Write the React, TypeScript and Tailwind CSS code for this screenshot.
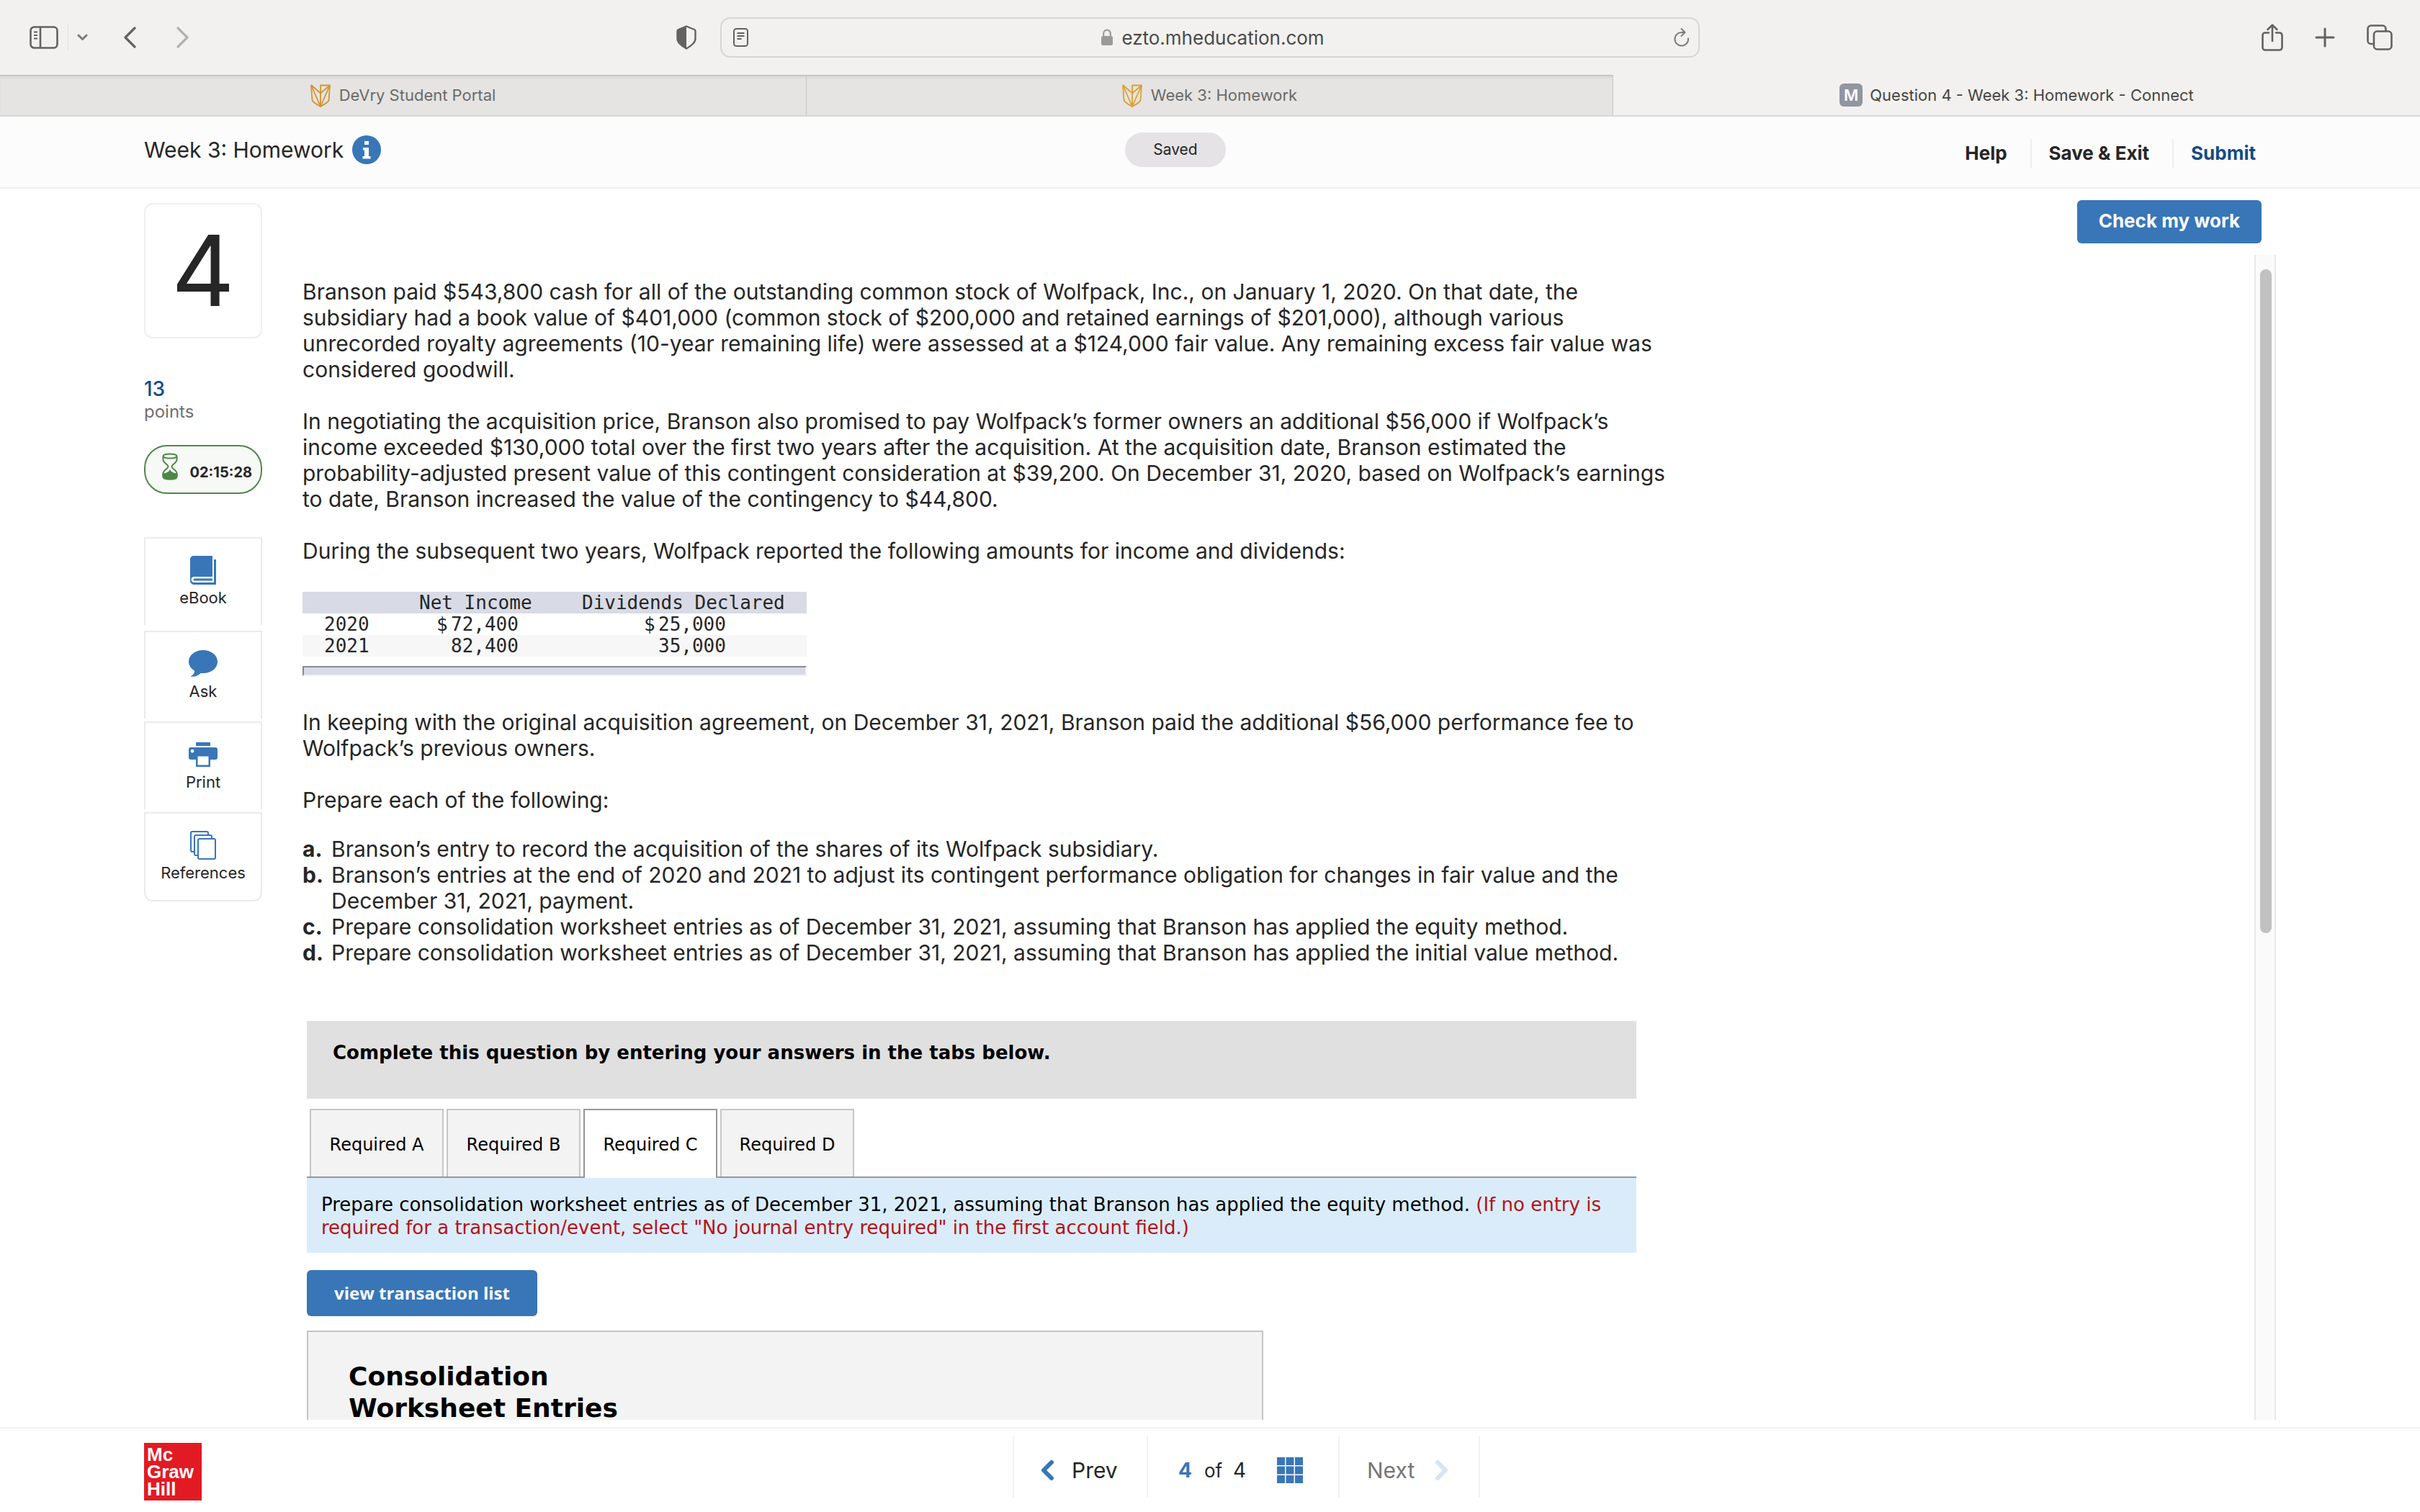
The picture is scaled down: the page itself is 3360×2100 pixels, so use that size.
import type { ReactNode } from "react";

const TOOLS = [
  { label: "eBook", icon: <BookIcon /> },
  { label: "Ask", icon: <AskIcon /> },
  { label: "Print", icon: <PrintIcon /> },
  { label: "References", icon: <ReferencesIcon /> },
];

const ROWS = [
  { year: "2020", sign: "$", income: "72,400", dividends: "25,000" },
  { year: "2021", sign: "", income: "82,400", dividends: "35,000" },
];

const REQUIREMENTS = ["Required A", "Required B", "Required C", "Required D"];
const ACTIVE = "Required C";

export default function App() {
  return (
    <div className="flex h-screen flex-col overflow-hidden bg-white font-['Inter','Liberation_Sans',sans-serif] text-[#262626]">
      <BrowserToolbar />
      <BrowserTabs />
      <AssignmentHeader />
      <main className="flex min-h-0 flex-1 pb-[10px]">
        <Sidebar />
        <div className="flex min-w-0 flex-1 flex-col">
          <div className="flex h-[92px] shrink-0 justify-end pt-4 pr-[220px]">
            <button className="h-[60px] rounded-md bg-[#3876b8] px-[30px] pb-1 text-[26px] font-bold text-white">
              Check my work
            </button>
          </div>
          <div className="flex min-h-0 flex-1 pr-[200px]">
            <Question />
            {/* scroll track */}
            <div className="w-[30px] shrink-0 border-x-2 border-[#e8e8e8] bg-[#fafafa] px-[6px] pt-5">
              <div className="h-[922px] w-4 rounded-full bg-[#c1c1c1]" />
            </div>
          </div>
        </div>
      </main>
      <Footer />
    </div>
  );
}

function BrowserToolbar() {
  return (
    <div className="flex h-[104px] shrink-0 items-center justify-between bg-[#f2f1ef] pr-[38px] pl-[41px] text-[#636261]">
      <div className="flex w-[926px] items-center justify-between">
        <div className="flex items-center">
          <button aria-label="Sidebar">
            <svg width="40" height="32" viewBox="0 0 40 32" fill="none" stroke="currentColor" strokeWidth="2.6">
              <rect x="1.5" y="1.5" width="37" height="29" rx="5" />
              <path d="M15 2v28" />
              <path d="M6 8.500h5M6 13h5M6 17.500h5" strokeWidth="2" />
            </svg>
          </button>
          <span className="ml-[13px] h-9 w-px bg-[#e0dfdd]" />
          <button className="ml-3" aria-label="Tab groups">
            <svg width="15" height="10" viewBox="0 0 15 10" fill="none" stroke="#7b7a79" strokeWidth="3" strokeLinecap="round" strokeLinejoin="round">
              <path d="M2 2l5.500 5.500L13 2" />
            </svg>
          </button>
          <button className="ml-[49px]" aria-label="Back">
            <svg width="18" height="30" viewBox="0 0 18 30" fill="none" stroke="currentColor" strokeWidth="3.200" strokeLinecap="round" strokeLinejoin="round">
              <path d="M16 2L3 15l13 13" />
            </svg>
          </button>
          <button className="ml-14" aria-label="Forward">
            <svg width="18" height="30" viewBox="0 0 18 30" fill="none" stroke="#b1b0af" strokeWidth="3.200" strokeLinecap="round" strokeLinejoin="round">
              <path d="M2 2l13 13L2 28" />
            </svg>
          </button>
        </div>
        <button aria-label="Privacy report">
          <svg width="28" height="34" viewBox="0 0 28 34">
            <path d="M14 1.500L25 6q1.500.6 1.500 2.500v10c0 6-6 10-12.500 14C7.500 28.500 1.500 24.500 1.500 18.500v-10Q1.500 6.600 3 6z" fill="none" stroke="currentColor" strokeWidth="2.400" strokeLinejoin="round" />
            <path d="M14 1.500v31C7.500 28.500 1.500 24.500 1.500 18.500v-10Q1.500 6.600 3 6z" fill="currentColor" />
          </svg>
        </button>
      </div>
      <div className="flex h-14 w-[1360px] items-center justify-between rounded-[14px] border-2 border-[#d7d6d4] px-4">
        <svg width="22" height="26" viewBox="0 0 22 26" fill="none" stroke="currentColor" strokeWidth="2">
          <rect x="1" y="1" width="19" height="24" rx="3.500" />
          <path d="M5.500 7h10M5.500 11h10M5.500 15h6" />
        </svg>
        <div className="flex items-center gap-3 pl-4 text-[26px] text-[#4b4a49]">
          <svg width="16" height="24" viewBox="0 0 16 24" className="text-[#9b9a99]">
            <rect y="10" width="16" height="13" rx="2.500" fill="currentColor" />
            <path d="M3.200 11V6.500a4.800 4.800 0 019.600 0V11" fill="none" stroke="currentColor" strokeWidth="2.200" />
          </svg>
          ezto.mheducation.com
        </div>
        <button className="-mr-4 px-3" aria-label="Reload">
          <svg width="22" height="28" viewBox="0 0 22 28" fill="none" stroke="#7b7a79" strokeWidth="2" strokeLinecap="round" strokeLinejoin="round">
            <path d="M20 15.500A9.300 9.300 0 1111 7h4" />
            <path d="M10.500 2l5 5-5 5" />
          </svg>
        </button>
      </div>
      <div className="flex w-[929px] items-center justify-end gap-11">
        <button aria-label="Share">
          <svg width="30" height="38" viewBox="0 0 30 38" fill="none" stroke="currentColor" strokeWidth="2.600" strokeLinecap="round" strokeLinejoin="round">
            <path d="M10 12.500H5A3.500 3.500 0 001.500 16v17A3.500 3.500 0 005 36.500h20a3.500 3.500 0 003.500-3.500V16a3.500 3.500 0 00-3.500-3.500h-5" />
            <path d="M15 24V2M8.500 8L15 1.800 21.500 8" />
          </svg>
        </button>
        <button aria-label="New tab">
          <svg width="28" height="28" viewBox="0 0 28 28" fill="none" stroke="currentColor" strokeWidth="3" strokeLinecap="round">
            <path d="M14 2v24M2 14h24" />
          </svg>
        </button>
        <button aria-label="Tab overview">
          <svg width="36" height="36" viewBox="0 0 36 36" fill="none" stroke="currentColor" strokeWidth="2.600">
            <path d="M10 27H6a4.500 4.500 0 01-4.500-4.500V6A4.500 4.500 0 016 1.500h16A4.500 4.500 0 0126.500 6v3" />
            <rect x="10" y="9.500" width="24.500" height="25" rx="4.500" />
          </svg>
        </button>
      </div>
    </div>
  );
}

function BrowserTabs() {
  return (
    <nav className="grid h-[58px] shrink-0 grid-cols-3 border-b-2 border-[#d8d8d7] bg-[#f2f1ef] text-[22px]">
      <InactiveTab>
        <DevryIcon color="#d1962f" />
        DeVry Student Portal
      </InactiveTab>
      <InactiveTab>
        <DevryIcon color="#dca12e" />
        Week 3: Homework
      </InactiveTab>
      <a href="#question" className="flex items-center justify-center gap-[10px] text-[#464544]">
        <span className="flex size-8 items-center justify-center rounded-md bg-[#9295a2] text-[22px] font-semibold text-white">
          M
        </span>
        Question 4 - Week 3: Homework - Connect
      </a>
    </nav>
  );
}

function InactiveTab({ children }: { children: ReactNode }) {
  return (
    <a
      href="#tab"
      className="flex items-center justify-center gap-3 border-t border-r border-t-[#bcbbb9] border-r-[#cdccca] bg-[#e5e4e2] text-[#6b6a69] shadow-[inset_0_3px_3px_-1px_#cfcecc]"
    >
      {children}
    </a>
  );
}

function AssignmentHeader() {
  return (
    <header className="grid h-[100px] shrink-0 grid-cols-[1362px_1fr_auto] items-center border-b-2 border-[#efefef] bg-[#fcfcfc] pr-[228px] pb-[6px] pl-[200px]">
      <div className="flex items-center gap-3">
        <h1 className="text-[30px]">Week 3: Homework</h1>
        <button aria-label="Assignment information">
          <svg width="40" height="40" viewBox="0 0 40 40">
            <circle cx="20" cy="20" r="20" fill="#3876b8" />
            <path d="M17 8h6v5h-6zM15 17h8v12h2.500v3.500h-11V29H17v-8.500h-2z" fill="#fff" />
          </svg>
        </button>
      </div>
      <span className="flex h-12 w-[140px] items-center justify-center rounded-full bg-[#e5e3e6] text-[21px]">
        Saved
      </span>
      <div className="flex items-center pt-[10px] text-[26px] leading-[40px] font-bold">
        <a href="#help" className="pr-8">Help</a>
        <a href="#exit" className="border-x-2 border-[#efefef] pr-8 pl-6">Save &amp; Exit</a>
        <button className="pl-6 text-[#164a85]">Submit</button>
      </div>
    </header>
  );
}

function Sidebar() {
  return (
    <aside className="ml-[200px] flex w-[164px] shrink-0 flex-col pt-5">
      <div className="flex h-[188px] items-center justify-center rounded-xl border-2 border-[#efefef] text-[136px] leading-none">
        4
      </div>
      <div className="mt-[54px] text-[28px] leading-8 font-medium text-[#164a85]">13</div>
      <div className="text-[24px] leading-8 text-[#707070]">points</div>
      <div className="mt-[30px] flex h-[68px] items-center justify-between rounded-[32px] border-2 border-[#4c8845] bg-[#f7f9f7] pr-3 pl-[23px]">
        <svg width="22" height="38" viewBox="0 0 22 38" fill="none" stroke="#4c8845" strokeWidth="2" className="mb-2">
          <ellipse cx="11" cy="4.500" rx="9.500" ry="3" />
          <path d="M1.500 5v4.500c0 4.500 7 6.500 7 9.500s-7 5-7 9.500V33c0 2 4 3.500 9.500 3.500s9.500-1.500 9.500-3.500v-4.500c0-4.500-7-6.500-7-9.500s7-5 7-9.500V5" />
          <path d="M1.500 33v-3.500c4-.5 8-2 9.500-4.500 1.500 2.500 5.500 4 9.500 4.500V33c0 2-4 3.500-9.500 3.500S1.500 35 1.500 33z" fill="#4c8845" />
        </svg>
        <span className="pt-2 text-[20px] font-bold">02:15:28</span>
      </div>
      <div className="mt-[60px] flex flex-col gap-1">
        {TOOLS.map((tool) => (
          <button
            key={tool.label}
            className="flex h-[122px] flex-col items-center border-2 border-b-0 border-[#ebebeb] pt-6 text-[22px] leading-7 first:mb-1 last:h-[124px] last:rounded-b-xl last:border-b-2"
          >
            <span className="mb-1 flex h-10 items-center">{tool.icon}</span>
            {tool.label}
          </button>
        ))}
      </div>
    </aside>
  );
}

function Question() {
  return (
    <article className="min-w-0 flex-1 overflow-hidden pt-[33px] pl-14 text-[30px] leading-[36px]">
      <p>
        Branson paid $543,800 cash for all of the outstanding common stock of Wolfpack, Inc., on January 1, 2020. On that date, the<br />
        subsidiary had a book value of $401,000 (common stock of $200,000 and retained earnings of $201,000), although various<br />
        unrecorded royalty agreements (10-year remaining life) were assessed at a $124,000 fair value. Any remaining excess fair value was<br />
        considered goodwill.
      </p>
      <p className="mt-9">
        In negotiating the acquisition price, Branson also promised to pay Wolfpack’s former owners an additional $56,000 if Wolfpack’s<br />
        income exceeded $130,000 total over the first two years after the acquisition. At the acquisition date, Branson estimated the<br />
        probability-adjusted present value of this contingent consideration at $39,200. On December 31, 2020, based on Wolfpack’s earnings<br />
        to date, Branson increased the value of the contingency to $44,800.
      </p>
      <p className="mt-9">
        During the subsequent two years, Wolfpack reported the following amounts for income and dividends:
      </p>

      <IncomeTable />

      <p className="mt-[46px]">
        In keeping with the original acquisition agreement, on December 31, 2021, Branson paid the additional $56,000 performance fee to<br />
        Wolfpack’s previous owners.
      </p>
      <p className="mt-9">Prepare each of the following:</p>
      <dl className="mt-8 grid grid-cols-[24px_1fr] gap-x-4">
        <Item letter="a">Branson’s entry to record the acquisition of the shares of its Wolfpack subsidiary.</Item>
        <Item letter="b">
          Branson’s entries at the end of 2020 and 2021 to adjust its contingent performance obligation for changes in fair value and the<br />
          December 31, 2021, payment.
        </Item>
        <Item letter="c">
          Prepare consolidation worksheet entries as of December 31, 2021, assuming that Branson has applied the equity method.
        </Item>
        <Item letter="d">
          Prepare consolidation worksheet entries as of December 31, 2021, assuming that Branson has applied the initial value method.
        </Item>
      </dl>

      <AnswerArea />
    </article>
  );
}

function Item({ letter, children }: { letter: string; children: ReactNode }) {
  return (
    <>
      <dt className="text-right font-bold whitespace-nowrap">{letter}.</dt>
      <dd>{children}</dd>
    </>
  );
}

function IncomeTable() {
  return (
    <div className="mt-[39px] w-[700px] font-['DejaVu_Sans_Mono',monospace] text-[26px] leading-[30px]">
      <table className="w-full border-collapse text-left">
        <thead>
          <tr className="bg-[#d8dbe6]">
            <th className="w-[162px] p-0" aria-label="Year" />
            <th className="w-[226px] p-0 font-normal">Net Income</th>
            <th className="p-0 font-normal">Dividends Declared</th>
          </tr>
        </thead>
        <tbody>
          {ROWS.map((row) => (
            <tr key={row.year} className="even:bg-[#f7f7f7]">
              <td className="p-0 pl-[30px]">{row.year}</td>
              <td className="p-0 pl-6">
                <Amount sign={row.sign} value={row.income} />
              </td>
              <td className="p-0 pl-[86px]">
                <Amount sign={row.sign} value={row.dividends} />
              </td>
            </tr>
          ))}
        </tbody>
      </table>
      <hr className="mt-[13px] h-[14px] border-2 border-t-[#888a92] border-r-[#eff1fd] border-b-[#eff1fd] border-l-[#888a92] bg-[#d8dbe6]" />
    </div>
  );
}

function Amount({ sign, value }: { sign: string; value: string }) {
  return (
    <span className="flex gap-1">
      <span className="w-4">{sign}</span>
      {value}
    </span>
  );
}

function AnswerArea() {
  return (
    <section className="mt-[77px] ml-[6px] w-[1846px] font-['DejaVu_Sans',sans-serif] text-[26px] leading-8 text-black">
      <p className="h-[108px] bg-[#e0e0e0] pt-7 pl-9 font-bold">
        Complete this question by entering your answers in the tabs below.
      </p>
      <div role="tablist" className="mt-[14px] flex gap-1 border-b-2 border-[#979797] pl-1 text-[24px]">
        {REQUIREMENTS.map((name) => (
          <button
            key={name}
            role="tab"
            aria-selected={name === ACTIVE}
            className={
              name === ACTIVE
                ? "-mb-0.5 h-24 w-[186px] border-2 border-b-0 border-[#979797] bg-white pt-0.5"
                : "h-[94px] w-[186px] border-2 border-b-0 border-[#c6c6c6] bg-[#f3f3f3] pt-1"
            }
          >
            {name}
          </button>
        ))}
      </div>
      <p className="h-[104px] bg-[#daecfa] pt-[21px] pl-5">
        Prepare consolidation worksheet entries as of December 31, 2021, assuming that Branson has applied the equity method.{" "}
        <span className="text-[#b51218]">
          (If no entry is<br />
          required for a transaction/event, select "No journal entry required" in the first account field.)
        </span>
      </p>
      <button className="mt-6 h-16 w-[320px] rounded-md bg-[#3876b8] font-['Open_Sans',sans-serif] text-[24px] font-bold text-white">
        view transaction list
      </button>
      <div className="mt-5 w-[1328px] border-2 border-[#c4c4c4] bg-[#f3f3f3] px-14 pt-10 pb-24">
        <h2 className="w-96 text-[36px] leading-[44px] font-bold">Consolidation Worksheet Entries</h2>
      </div>
    </section>
  );
}

function Footer() {
  return (
    <footer className="flex h-[118px] shrink-0 border-t-2 border-[#f2f2f2] pt-[10px] pl-[200px]">
      <div className="mt-[10px] mr-[1126px] flex size-20 flex-col justify-center bg-[#e21a23] pl-1 font-['Liberation_Sans',sans-serif] text-[26px] leading-6 font-bold text-white">
        <span>Mc</span>
        <span>Graw</span>
        <span>Hill</span>
      </div>
      <div className="flex h-[86px] border-x-2 border-[#f2f2f2] text-[30px]">
        <button className="flex w-[184px] items-center gap-6 pt-[10px] pl-9">
          <svg width="20" height="30" viewBox="0 0 20 30" fill="none" stroke="#3876b8" strokeWidth="6" strokeLinecap="round" strokeLinejoin="round">
            <path d="M16 4L5 15l11 11" />
          </svg>
          Prev
        </button>
        <div className="flex w-[268px] items-center border-x-2 border-[#f2f2f2] pt-[10px] pl-[42px] text-[28px]">
          <b className="w-9 text-[#3876b8]">4</b>
          <span className="w-10 text-[26px]">of</span>
          <span className="w-[61px]">4</span>
          <button aria-label="Question list">
            <svg width="36" height="36" viewBox="0 0 36 36" fill="#3876b8">
              <path d="M0 0h11v11H0zM12.500 0h11v11h-11zM25 0h11v11H25zM0 12.500h11v11H0zM12.500 12.500h11v11h-11zM25 12.500h11v11H25zM0 25h11v11H0zM12.500 25h11v11h-11zM25 25h11v11H25z" />
            </svg>
          </button>
        </div>
        <button className="flex w-[193px] items-center gap-7 pt-[10px] pl-[38px] text-[#757575]" disabled>
          Next
          <svg width="20" height="30" viewBox="0 0 20 30" fill="none" stroke="#d7e4f1" strokeWidth="6" strokeLinecap="round" strokeLinejoin="round">
            <path d="M4 4l11 11L4 26" />
          </svg>
        </button>
      </div>
    </footer>
  );
}

function DevryIcon({ color }: { color: string }) {
  return (
    <svg width="28" height="32" viewBox="0 0 28 32" fill="none" stroke={color} strokeWidth="1.800" strokeLinejoin="round">
      <path d="M1 1l1.500 21Q3 25 14 31q11-6 11.500-9L27 1.500H14V12" />
      <path d="M1 1l13 11.500L27 1.500M1 1l13 30L27 1.500M14 12v19" />
    </svg>
  );
}

function BookIcon() {
  return (
    <svg width="36" height="40" viewBox="0 0 36 40" fill="#3876b8">
      <path d="M5 0h26v29H6c-6 0-6 8 0 8h27V5h3v35H6c-4 0-6-2.500-6-6V5c0-3 2-5 5-5z" />
      <path d="M6 31.500h25v3H6c-2 0-2-3 0-3z" />
    </svg>
  );
}

function AskIcon() {
  return (
    <svg width="40" height="38" viewBox="0 0 40 38" fill="#3876b8">
      <path d="M20 0c11.500 0 20 7 20 16s-8.500 16-20 16h-3.500C13 35.500 8 37.500 2.500 36.500 6 34.500 8.500 32 8 28.500 3 25.500 0 21 0 16 0 7 8.500 0 20 0z" />
    </svg>
  );
}

function PrintIcon() {
  return (
    <svg width="40" height="34" viewBox="0 0 40 34" fill="#3876b8">
      <path d="M10 0h20v5H10z" />
      <path fillRule="evenodd" d="M3 7h34a3 3 0 013 3v11a3 3 0 01-3 3h-7v10H10V24H3a3 3 0 01-3-3V10a3 3 0 013-3zm9.500 12.500v12h15v-12zM5 9.800a2.400 2.400 0 100 4.800 2.400 2.400 0 000-4.800z" />
    </svg>
  );
}

function ReferencesIcon() {
  return (
    <svg width="36" height="40" viewBox="0 0 36 40" fill="#fff" stroke="#3876b8" strokeWidth="2">
      <rect x="1" y="1" width="24" height="28" rx="2" />
      <rect x="6" y="6" width="24" height="28" rx="2" />
      <rect x="11" y="11" width="24" height="28" rx="2" />
    </svg>
  );
}
